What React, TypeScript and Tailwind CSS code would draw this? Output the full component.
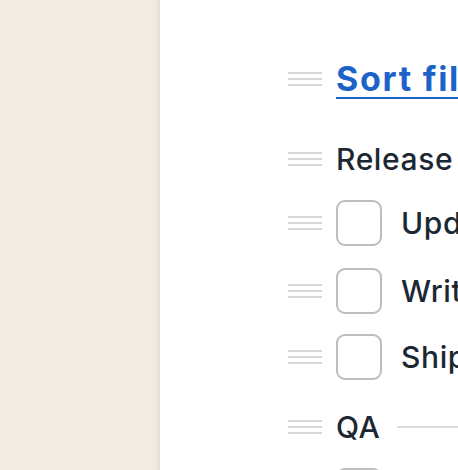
import React from "react";

// drag handle: three short grey bars
function Handle() {
  return (
    <div className="flex w-[34px] shrink-0 flex-col gap-[4px]">
      <span className="block h-[2px] w-full bg-[#d8d8d8]" />
      <span className="block h-[2px] w-full bg-[#d8d8d8]" />
      <span className="block h-[2px] w-full bg-[#d8d8d8]" />
    </div>
  );
}

function Section({ title, className }: { title: string; className?: string }) {
  return (
    <div className={`flex h-[48px] shrink-0 items-center gap-[14px] ${className ?? ""}`}>
      <Handle />
      <span className="text-[30px] font-medium leading-none tracking-[0.02em] text-[#1b2833]">{title}</span>
      <span className="ml-[3px] block h-[2px] w-[400px] shrink-0 bg-[#dcdcdc]" />
    </div>
  );
}

function Task({ label, className }: { label: string; className?: string }) {
  return (
    <div className={`flex h-[46px] shrink-0 items-center gap-[14px] ${className ?? ""}`}>
      <Handle />
      <span className="block h-[46px] w-[46px] shrink-0 rounded-[9px] border-2 border-[#bdbdbd] bg-white" />
      <span className="ml-[5px] text-[30px] font-medium leading-none tracking-[0.02em] text-[#1b2833]">{label}</span>
    </div>
  );
}

export default function App() {
  const tasks = ["Update changelog", "Write release notes", "Ship to production"];

  return (
    <div
      className="flex h-[470px] w-[458px] overflow-hidden bg-white"
      style={{ fontFamily: "Inter, 'Liberation Sans', sans-serif" }}
    >
      <aside className="h-full w-[160px] shrink-0 bg-[#f3ece2] shadow-[inset_-6px_0_5px_-4px_rgba(120,100,70,0.12)]" />

      <main className="flex min-w-0 flex-1 flex-col whitespace-nowrap pl-[128px] pt-[55px]">
        <div className="flex h-[48px] shrink-0 items-center gap-[14px]">
          <Handle />
          <a
            href="#"
            className="text-[34px] font-bold leading-none tracking-[0.05em] text-[#1d63c7] underline decoration-2 underline-offset-[6px]"
          >
            Sort files by type
          </a>
        </div>

        <Section title="Release checklist" className="mt-[32px]" />

        {tasks.map((t, i) => (
          <Task key={t} label={t} className={i === 0 ? "mt-[17px]" : i === 1 ? "mt-[22px]" : "mt-[20px]"} />
        ))}

        <Section title="QA" className="mt-[23px]" />

        <Task label="Run smoke tests" className="mt-[17px]" />
      </main>
    </div>
  );
}
